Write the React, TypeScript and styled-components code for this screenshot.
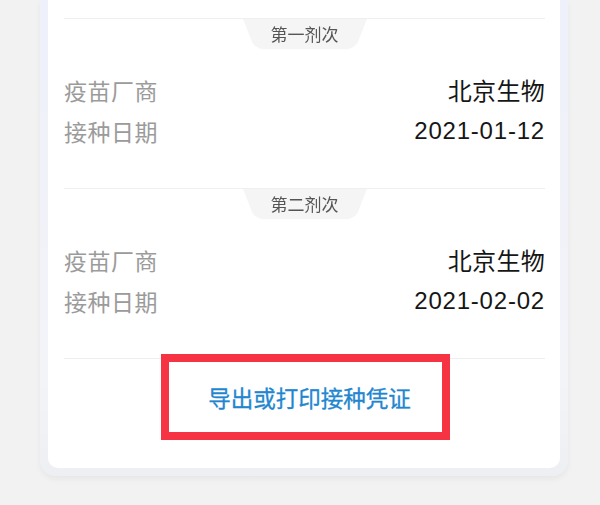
import styled, { createGlobalStyle } from "styled-components";

const GlobalStyle = createGlobalStyle`
  html, body {
    margin: 0;
    padding: 0;
    background: #f2f2f2;
    font-family: "Liberation Sans", "Noto Sans CJK SC", sans-serif;
  }
`;

type Dose = {
  title: string;
  maker: string;
  date: string;
};

const doses: Dose[] = [
  { title: "第一剂次", maker: "北京生物", date: "2021-01-12" },
  { title: "第二剂次", maker: "北京生物", date: "2021-02-02" },
];

export default function App() {
  return (
    <Page>
      <GlobalStyle />
      <Frame>
        <Card>
          {doses.map((dose) => (
            <Section key={dose.title}>
              <TabWrap>
                <Tab>{dose.title}</Tab>
              </TabWrap>
              <Rows>
                <Row>
                  <Label>疫苗厂商</Label>
                  <Value>{dose.maker}</Value>
                </Row>
                <Row>
                  <Label>接种日期</Label>
                  <Value $digits>{dose.date}</Value>
                </Row>
              </Rows>
            </Section>
          ))}
          <Footer>
            <ExportButton>导出或打印接种凭证</ExportButton>
            {/* red annotation box drawn over the button */}
            <Highlight />
          </Footer>
        </Card>
      </Frame>
    </Page>
  );
}

const Page = styled.div`
  width: 600px;
  height: 505px;
  padding-left: 40px;
  box-sizing: border-box;
  overflow: hidden;
`;

const Frame = styled.div`
  width: 528px;
  box-sizing: border-box;
  padding: 0 8px 8px;
  background: linear-gradient(180deg, #eef0fa 0%, #f3f4f8 80%, #eeeff2 100%);
  border-radius: 0 0 16px 16px;
  box-shadow: 0 3px 6px rgba(0, 0, 0, 0.05);
`;

const Card = styled.div`
  background: #ffffff;
  border-radius: 0 0 10px 10px;
  padding: 18px 15px 0 16px;
`;

const Section = styled.div`
  border-top: 1px solid #efefef;
`;

const TabWrap = styled.div`
  display: flex;
  justify-content: center;
`;

const Tab = styled.div`
  position: relative;
  width: 124px;
  height: 30px;
  display: flex;
  align-items: center;
  justify-content: center;
  padding-bottom: 2px;
  box-sizing: border-box;
  font-size: 17px;
  color: #555555;
  z-index: 0;

  &::before {
    content: "";
    position: absolute;
    left: 0;
    right: 0;
    top: 0;
    height: 42px;
    background: #f5f5f5;
    border-radius: 0 0 12px 12px;
    transform-origin: top;
    transform: perspective(80px) rotateX(-27deg);
    z-index: -1;
  }
`;

const Rows = styled.div`
  display: flex;
  flex-direction: column;
  padding: 20px 0 37px;
`;

const Row = styled.div`
  height: 41px;
  display: flex;
  align-items: center;
  justify-content: space-between;
  font-size: 23px;
`;

const Label = styled.span`
  color: #9b9b9b;
  letter-spacing: 0.5px;
`;

const Value = styled.span<{ $digits?: boolean }>`
  color: #161616;
  font-size: 24px;
  letter-spacing: ${(p) => (p.$digits ? "0.8px" : "0.3px")};
`;

const Footer = styled.div`
  position: relative;
  height: 110px;
  border-top: 1px solid #efefef;
  display: flex;
  justify-content: center;
  padding-top: 26px;
  box-sizing: border-box;
`;

const ExportButton = styled.div`
  height: 30px;
  line-height: 30px;
  font-size: 22.5px;
  color: #2286cf;
  padding-left: 10px;
  -webkit-text-stroke: 0.3px #2286cf;
`;

const Highlight = styled.div`
  position: absolute;
  top: -5px;
  left: 97px;
  width: 289px;
  height: 86px;
  box-sizing: border-box;
  border: 8px solid #f63343;
  pointer-events: none;
`;
